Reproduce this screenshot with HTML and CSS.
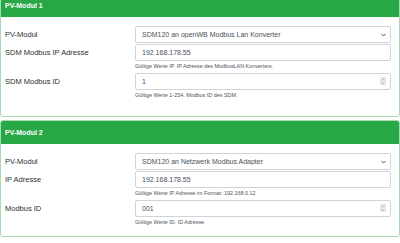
FILE: index.html
```html
<!DOCTYPE html>
<html lang="de">
<head>
    <meta charset="UTF-8">
    <meta name="viewport" content="width=device-width, initial-scale=1.0">
    <title>PV-Module</title>
    <link rel="stylesheet" href="styles.css">
</head>
<body>
    <div class="page">
        <div class="card">
            <div class="card-header">PV-Modul 1</div>
            <div class="card-body card-body-loose">
                <div class="form-row">
                    <label for="pv1type">PV-Modul</label>
                    <div class="field select-wrap">
                        <select id="pv1type">
                            <option>SDM120 an openWB Modbus Lan Konverter</option>
                        </select>
                        <svg class="chevron" width="5" height="4" viewBox="0 0 5 4"><path d="M0.5 1 L2.5 3 L4.5 1" fill="none" stroke="#444" stroke-width="0.9"/></svg>
                    </div>
                </div>
                <div class="form-row">
                    <label for="pv1ip">SDM Modbus IP Adresse</label>
                    <div class="field">
                        <input type="text" id="pv1ip" value="192.168.178.55">
                        <small class="help">Gültige Werte IP. IP Adresse des ModbusLAN Konverters.</small>
                    </div>
                </div>
                <div class="form-row">
                    <label for="pv1id">SDM Modbus ID</label>
                    <div class="field">
                        <div class="number-wrap">
                            <input type="text" id="pv1id" value="1">
                            <span class="spinner"></span>
                        </div>
                        <small class="help">Gültige Werte 1-254. Modbus ID des SDM.</small>
                    </div>
                </div>
            </div>
        </div>

        <div class="card">
            <div class="card-header">PV-Modul 2</div>
            <div class="card-body">
                <div class="form-row">
                    <label for="pv2type">PV-Modul</label>
                    <div class="field select-wrap">
                        <select id="pv2type">
                            <option>SDM120 an Netzwerk Modbus Adapter</option>
                        </select>
                        <svg class="chevron" width="5" height="4" viewBox="0 0 5 4"><path d="M0.5 1 L2.5 3 L4.5 1" fill="none" stroke="#444" stroke-width="0.9"/></svg>
                    </div>
                </div>
                <div class="form-row">
                    <label for="pv2ip">IP Adresse</label>
                    <div class="field">
                        <input type="text" id="pv2ip" value="192.168.178.55">
                        <small class="help">Gültige Werte IP Adresse im Format: 192.168.0.12</small>
                    </div>
                </div>
                <div class="form-row">
                    <label for="pv2id">Modbus ID</label>
                    <div class="field">
                        <div class="number-wrap">
                            <input type="text" id="pv2id" value="001">
                            <span class="spinner"></span>
                        </div>
                        <small class="help">Gültige Werte ID. ID Adresse</small>
                    </div>
                </div>
            </div>
        </div>
    </div>
</body>
</html>
```

FILE: styles.css
```css
body {
    margin: 0;
    font-family: "Liberation Sans", Arial, sans-serif;
    font-size: 7px;
    color: #212529;
    background-color: #ffffff;
}
.page {
    margin-top: -7px;
}
.card {
    border: 1px solid #a9dab3;
    border-radius: 3px;
    margin-bottom: 3px;
    overflow: hidden;
}
.card-header {
    background-color: #28a745;
    color: #ffffff;
    font-weight: bold;
    height: 23px;
    line-height: 23px;
    padding: 0 4px;
}
.card-body {
    padding: 9px 8px 9px 4px;
}
.card-body-loose {
    padding-bottom: 16px;
}
.form-row {
    display: grid;
    grid-template-columns: 130px 1fr;
    margin-bottom: 2px;
}
.form-row:first-child {
    margin-bottom: 1px;
}
.form-row:last-child {
    margin-bottom: 0;
}
.form-row label {
    font-size: 7.5px;
    line-height: 17px;
    color: #2b2f33;
}
.field {
    display: flex;
    flex-direction: column;
}
.field input, .field select {
    box-sizing: border-box;
    width: 100%;
    height: 17px;
    padding: 0 6px;
    border: 1px solid #ced4da;
    border-radius: 2px;
    font-family: inherit;
    font-size: 7px;
    color: #495057;
    background-color: #ffffff;
    margin: 0;
    outline: none;
}
.field select {
    appearance: none;
    -webkit-appearance: none;
}
.select-wrap, .number-wrap {
    position: relative;
}
.chevron {
    position: absolute;
    right: 5px;
    top: 7px;
}
.spinner {
    position: absolute;
    right: 5px;
    top: 4px;
    width: 6px;
    height: 8px;
    background-color: #e4e4e4;
    border-radius: 1px;
}
.spinner::before, .spinner::after {
    content: "";
    position: absolute;
    left: 1.5px;
    border-left: 1.5px solid transparent;
    border-right: 1.5px solid transparent;
}
.spinner::before {
    top: 1.5px;
    border-bottom: 1.5px solid #999;
}
.spinner::after {
    bottom: 1.5px;
    border-top: 1.5px solid #999;
}
.help {
    font-size: 5.4px;
    line-height: 9px;
    margin-top: 1px;
    color: #4f5459;
}
```
